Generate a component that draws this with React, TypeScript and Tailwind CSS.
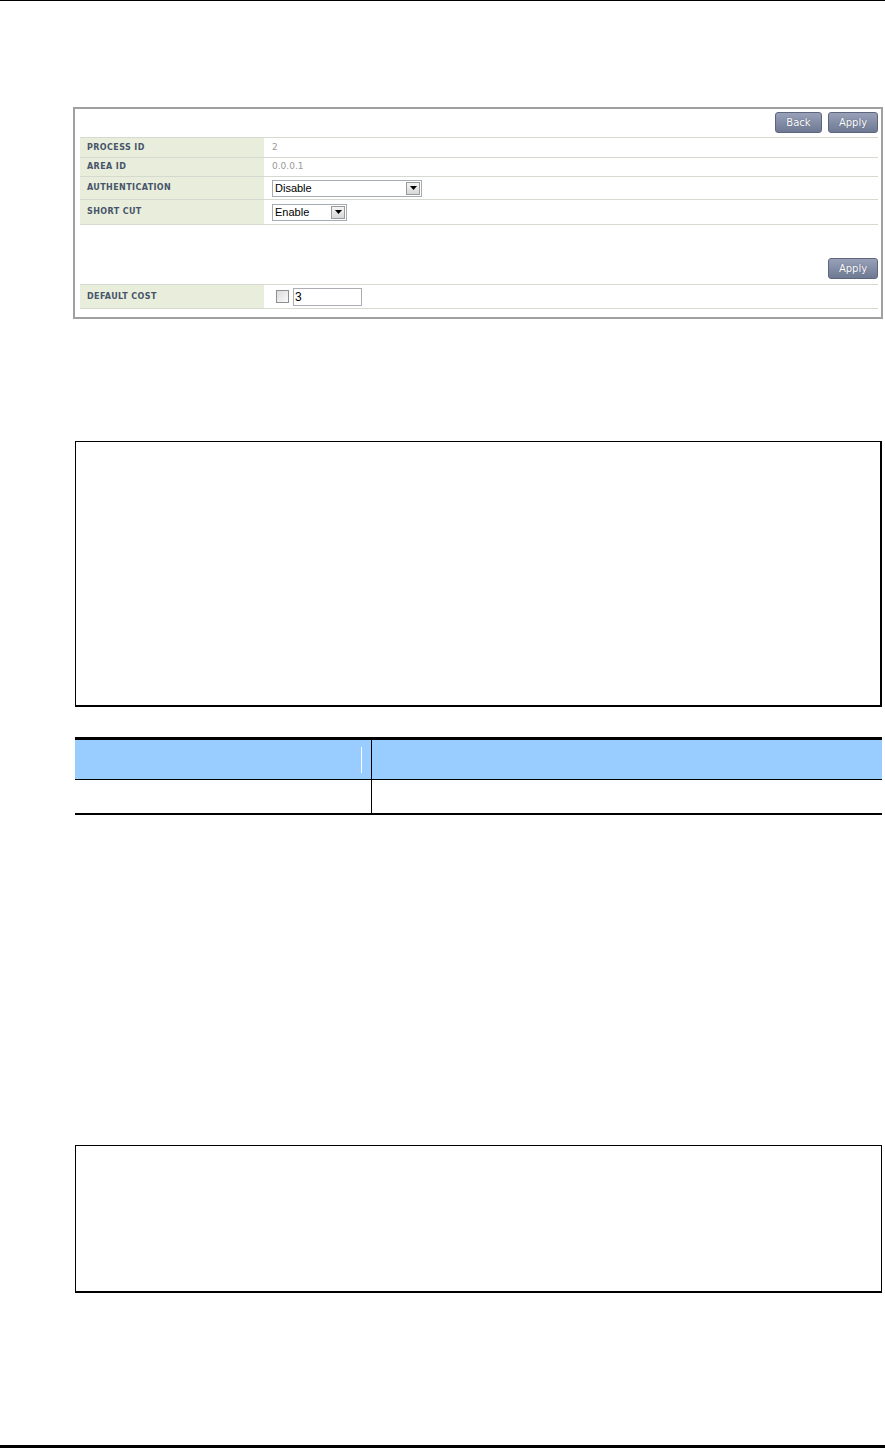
import * as React from 'react';

const labelCls =
  "w-[184px] shrink-0 bg-[#e8eedb] pl-[7px] flex items-center text-[8px] font-bold text-[#47546a] font-['DejaVu_Sans',sans-serif] tracking-[0.4px]";

const PanelButton = ({ children, className = '' }: { children: React.ReactNode; className?: string }) => (
  <div
    className={`h-[21px] flex items-center justify-center rounded-[3px] border border-[#5d667c] bg-gradient-to-b from-[#98a1b8] to-[#6e7993] text-white text-[10px] font-['DejaVu_Sans',sans-serif] [text-shadow:0_0_1px_#4b546a] ${className}`}
  >
    {children}
  </div>
);

const FakeSelect = ({ value, width }: { value: string; width: string }) => (
  <div className={`${width} h-[17px] flex items-stretch border border-[#a5acb2] bg-white`}>
    <span className="flex-1 pl-[2px] flex items-center text-[11px] text-black font-['Liberation_Sans',Arial,sans-serif]">
      {value}
    </span>
    <span className="w-[14px] m-px flex items-center justify-center border border-[#9a9a9a] bg-gradient-to-b from-[#f4f4f4] to-[#d8d8d8]">
      <svg width="7" height="4" viewBox="0 0 7 4">
        <path d="M0 0H7L3.5 4Z" fill="#000" />
      </svg>
    </span>
  </div>
);

const Row = ({ label, h, children }: { label: string; h: string; children?: React.ReactNode }) => (
  <div className={`${h} flex border-b border-[#d6d9d0]`}>
    <div className={labelCls}>{label}</div>
    <div className="flex-1 pl-[8px] flex items-center">{children}</div>
  </div>
);

const OspfPanel = () => (
  <div className="ml-[73px] mt-[106px] w-[810px] h-[212px] border-2 border-[#a0a0a0] pl-[5px] pr-[3px] flex flex-col">
    <div className="h-[29px] border-b border-[#d6d9d0] flex justify-end items-start pt-[3px] gap-[6px]">
      <PanelButton className="w-[47px]">Back</PanelButton>
      <PanelButton className="w-[50px]">Apply</PanelButton>
    </div>
    <Row label="PROCESS ID" h="h-[20px]">
      <span className="text-[9px] text-[#999] font-['DejaVu_Sans',sans-serif]">2</span>
    </Row>
    <Row label="AREA ID" h="h-[19px]">
      <span className="text-[9px] text-[#999] font-['DejaVu_Sans',sans-serif]">0.0.0.1</span>
    </Row>
    <Row label="AUTHENTICATION" h="h-[23px]">
      <FakeSelect value="Disable" width="w-[150px]" />
    </Row>
    <Row label="SHORT CUT" h="h-[25px]">
      <FakeSelect value="Enable" width="w-[75px]" />
    </Row>
    <div className="h-[60px] border-b border-[#d6d9d0] flex justify-end items-start pt-[33px]">
      <PanelButton className="w-[50px]">Apply</PanelButton>
    </div>
    <Row label="DEFAULT COST" h="h-[24px]">
      <div className="flex items-center gap-[4px] -ml-[4px] pl-[8px]">
        <span className="w-[13px] h-[13px] border border-[#8f8f8f] bg-gradient-to-br from-[#dcdcdc] to-[#fafafa]" />
        <span className="w-[69px] h-[18px] border border-[#abadb3] bg-white pl-[1px] flex items-center text-[12px] text-black font-['Liberation_Sans',Arial,sans-serif]">
          3
        </span>
      </div>
    </Row>
  </div>
);

export default function App() {
  return (
    <div className="w-[885px] h-[1449px] bg-white flex flex-col">
      <div className="h-px bg-black" />
      <OspfPanel />
      <div className="ml-[75px] mt-[122px] w-[807px] h-[266px] border border-black border-r-2 border-b-2" />
      <div className="ml-[75px] mt-[30px] w-[807px] flex flex-col">
        <div className="h-[3px] bg-black" />
        <div className="h-[40px] flex bg-[#99ccff] border-b border-black">
          <div className="w-[296px] flex justify-end items-center pr-[9px]">
            <div className="w-px h-[26px] bg-white" />
          </div>
          <div className="w-px bg-black" />
          <div className="flex-1" />
        </div>
        <div className="h-[33px] flex">
          <div className="w-[296px]" />
          <div className="w-px bg-black" />
          <div className="flex-1" />
        </div>
        <div className="h-[2px] bg-black" />
      </div>
      <div className="ml-[75px] mt-[330px] w-[807px] h-[148px] border border-black border-b-2" />
      <div className="mt-[152px] h-[3px] bg-black" />
    </div>
  );
}
